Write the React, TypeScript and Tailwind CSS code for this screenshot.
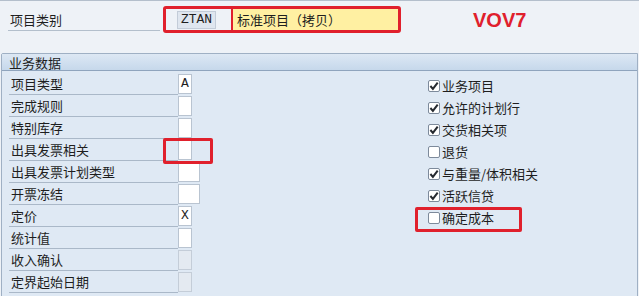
import React from 'react';

const leftRows = [
  { label: '项目类型', value: 'A', wide: false, disabled: false },
  { label: '完成规则', value: '', wide: false, disabled: false },
  { label: '特别库存', value: '', wide: false, disabled: false },
  { label: '出具发票相关', value: '', wide: false, disabled: false },
  { label: '出具发票计划类型', value: '', wide: true, disabled: false },
  { label: '开票冻结', value: '', wide: true, disabled: false },
  { label: '定价', value: 'X', wide: false, disabled: false },
  { label: '统计值', value: '', wide: false, disabled: false },
  { label: '收入确认', value: '', wide: false, disabled: true },
  { label: '定界起始日期', value: '', wide: false, disabled: true },
];

const checks = [
  { label: '业务项目', on: true },
  { label: '允许的计划行', on: true },
  { label: '交货相关项', on: true },
  { label: '退货', on: false },
  { label: '与重量/体积相关', on: true },
  { label: '活跃信贷', on: true },
  { label: '确定成本', on: false },
];

const CheckBox = ({ on }: { on: boolean }) => (
  <div className="flex h-[12px] w-[12px] items-center justify-center rounded-[2px] border border-[#7d8a9b] bg-white">
    {on && (
      <svg width="10" height="10" viewBox="0 0 10 10">
        <path d="M1.4 5 L3.9 7.9 L8.7 1.6" fill="none" stroke="#262a30" strokeWidth="2" />
      </svg>
    )}
  </div>
);

function App() {
  return (
    <div
      className="relative h-[296px] w-[639px] overflow-hidden border-t border-[#b4bfcc] bg-[#eef2f7] text-[13px] text-[#1e1e1e]"
      style={{ fontFamily: '"Noto Sans CJK SC", "Noto Sans", sans-serif' }}
    >
      {/* header row */}
      <div className="mt-[6px] flex h-[26px] items-center">
        <div className="ml-[8px] h-[22px] w-[152px] border-b border-[#b3bfcc] pl-[2px] leading-[22px]">
          项目类别
        </div>
        <div className="ml-[17px] flex h-[18px] w-[39px] items-center justify-center border border-[#c3ccd8] bg-[#dfe6ef] font-['Liberation_Mono',monospace] text-[13px]">
          ZTAN
        </div>
        <div className="ml-[15px] h-[22px] w-[167px] border-l-2 border-[#e0202c] bg-[#fff0a2] pl-[4px] leading-[22px]">
          标准项目（拷贝）
        </div>
        <div className="ml-[75px] font-['Liberation_Sans',sans-serif] text-[20px] font-bold leading-[22px] text-[#e0202c]">
          VOV7
        </div>
      </div>

      {/* group box */}
      <div className="ml-[1px] mt-[20px] h-[260px] w-[637px] rounded-tl-[2px] border border-[#9fb0c4] bg-[#dfe9f4]">
        <div className="h-[17px] border-b border-[#8fa4bd] bg-gradient-to-b from-[#dde8f4] to-[#c6d8eb] pl-[7px] leading-[17px]">
          业务数据
        </div>
        <div className="flex pt-[2px]">
          <div className="w-[200px]">
            {leftRows.map((r, i) => (
              <div key={i} className="flex h-[22px] items-start">
                <div className="ml-[7px] h-[22px] w-[169px] border-b border-[#aab8c8] pl-[2px] leading-[22px]">
                  {r.label}
                </div>
                <div
                  className={
                    "mt-[1px] flex h-[20px] items-center justify-center border font-['Liberation_Mono',monospace] text-[13px] " +
                    (r.wide ? 'w-[22px] ' : 'w-[14px] ') +
                    (r.disabled ? 'border-[#c4cdd8] bg-[#e4eaf1]' : 'border-[#b9c4d1] bg-white')
                  }
                >
                  {r.value}
                </div>
              </div>
            ))}
          </div>
          <div className="ml-[226px]">
            {checks.map((c, i) => (
              <div key={i} className="flex h-[22px] items-center gap-[2px] pt-[3px]">
                <CheckBox on={c.on} />
                <span className="leading-[18px]">{c.label}</span>
              </div>
            ))}
          </div>
        </div>
      </div>

      {/* red highlight frames */}
      <div className="absolute left-[163px] top-[5px] h-[27px] w-[238px] rounded-[3px] border-[3px] border-[#e0202c]" />
      <div className="absolute left-[163px] top-[137px] h-[26px] w-[50px] rounded-[2px] border-[3px] border-[#e0202c]" />
      <div className="absolute left-[415px] top-[206px] h-[25px] w-[107px] rounded-[2px] border-[3px] border-[#e0202c]" />
    </div>
  );
}

export default App;
